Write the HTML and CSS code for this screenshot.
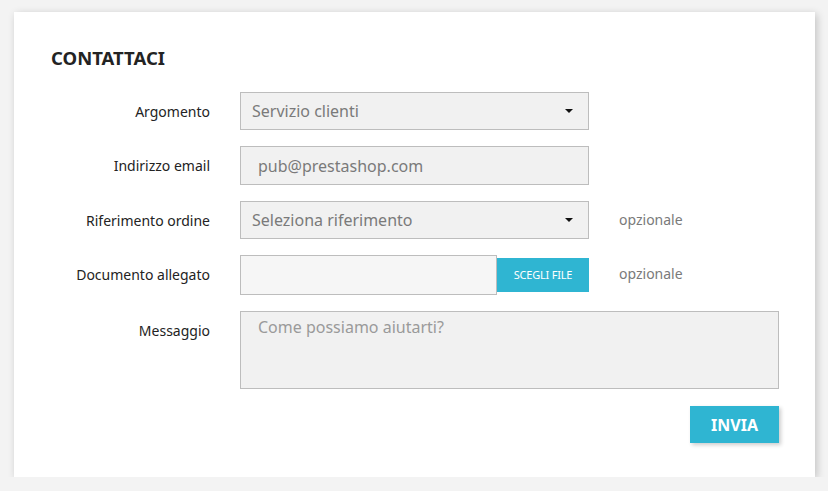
FILE: index.html
```html
<!DOCTYPE html>
<html lang="it">
<head>
<meta charset="utf-8">
<title>Contattaci</title>
<link rel="stylesheet" href="styles.css">
</head>
<body>
<section class="card">
  <h3 class="title">CONTATTACI</h3>
  <form class="form">
    <div class="row">
      <label class="label">Argomento</label>
      <div class="field select-wrap">
        <select class="control select"><option>Servizio clienti</option></select>
        <svg class="arrow" width="8" height="4" viewBox="0 0 8 4"><polygon points="0,0 8,0 4,4" fill="#111"/></svg>
      </div>
    </div>
    <div class="row">
      <label class="label">Indirizzo email</label>
      <div class="field">
        <input class="control input" type="text" value="pub@prestashop.com">
      </div>
    </div>
    <div class="row">
      <label class="label">Riferimento ordine</label>
      <div class="field select-wrap">
        <select class="control select"><option>Seleziona riferimento</option></select>
        <svg class="arrow" width="8" height="4" viewBox="0 0 8 4"><polygon points="0,0 8,0 4,4" fill="#111"/></svg>
      </div>
      <span class="hint">opzionale</span>
    </div>
    <div class="row">
      <label class="label">Documento allegato</label>
      <div class="field file">
        <div class="file-box"></div>
        <span class="file-btn">SCEGLI FILE</span>
      </div>
      <span class="hint">opzionale</span>
    </div>
    <div class="row">
      <label class="label">Messaggio</label>
      <div class="field wide">
        <textarea class="control textarea" placeholder="Come possiamo aiutarti?"></textarea>
      </div>
    </div>
    <div class="actions">
      <button type="button" class="submit">INVIA</button>
    </div>
  </form>
</section>
</body>
</html>
```
FILE: styles.css
```css
* { box-sizing: border-box; }
html, body { margin: 0; padding: 0; }
body {
  background: #f3f3f3;
  font-family: "Noto Sans", "Open Sans", sans-serif;
  color: #232323;
  padding: 12px 13px 0 14px;
}
.card {
  width: 801px;
  height: 465px;
  background: #fff;
  box-shadow: 2px 2px 8px 0 rgba(0, 0, 0, 0.2);
  padding: 34px 37px 34px 37px;
}
.title {
  margin: 0 0 22px 0;
  font-size: 18.5px;
  line-height: 24px;
  font-weight: 700;
  color: #232323;
}
.form { display: flex; flex-direction: column; gap: 16px; }
.row {
  display: flex;
  align-items: flex-start;
}
.label {
  width: 159px;
  flex: none;
  text-align: right;
  font-size: 14px;
  line-height: 20px;
  padding-top: 10px;
  color: #232323;
  margin-right: 30px;
}
.field {
  width: 349px;
  flex: none;
  position: relative;
}
.field.wide { width: 539px; }
.control {
  display: block;
  width: 100%;
  font-family: inherit;
  font-size: 16px;
  line-height: 22px;
  color: #7a7a7a;
  background: #f1f1f1;
  border: 1px solid #bdbdbd;
  border-radius: 0;
  outline: none;
  margin: 0;
}
.select {
  -webkit-appearance: none;
  appearance: none;
  height: 38px;
  padding: 0 30px 0 11px;
}
.arrow {
  position: absolute;
  right: 16px;
  top: 17px;
}
.input {
  height: 39px;
  padding: 0 16px 0 17px;
}
.file {
  display: flex;
  align-items: center;
  height: 40px;
}
.file-box {
  width: 257px;
  height: 40px;
  background: #f6f6f6;
  border: 1px solid #bdbdbd;
}
.file-btn {
  flex: 1;
  height: 34px;
  background: #2fb5d2;
  color: #fff;
  font-size: 11px;
  line-height: 34px;
  text-align: center;
  letter-spacing: -0.2px;
}
.hint {
  margin-left: 30px;
  font-size: 14px;
  line-height: 20px;
  padding-top: 9px;
  color: #7a7a7a;
}
.textarea {
  height: 78px;
  padding: 4px 17px;
  resize: none;
}
.textarea::placeholder { color: #9a9a9a; opacity: 1; }
.actions {
  display: flex;
  justify-content: flex-end;
  width: 728px;
  margin-top: 1px;
}
.submit {
  width: 89px;
  height: 37px;
  background: #2fb5d2;
  border: none;
  color: #fff;
  font-family: inherit;
  font-size: 16px;
  font-weight: 700;
  line-height: 22px;
  padding: 0;
  box-shadow: 2px 2px 4px 0 rgba(0, 0, 0, 0.2);
  cursor: pointer;
}
```
